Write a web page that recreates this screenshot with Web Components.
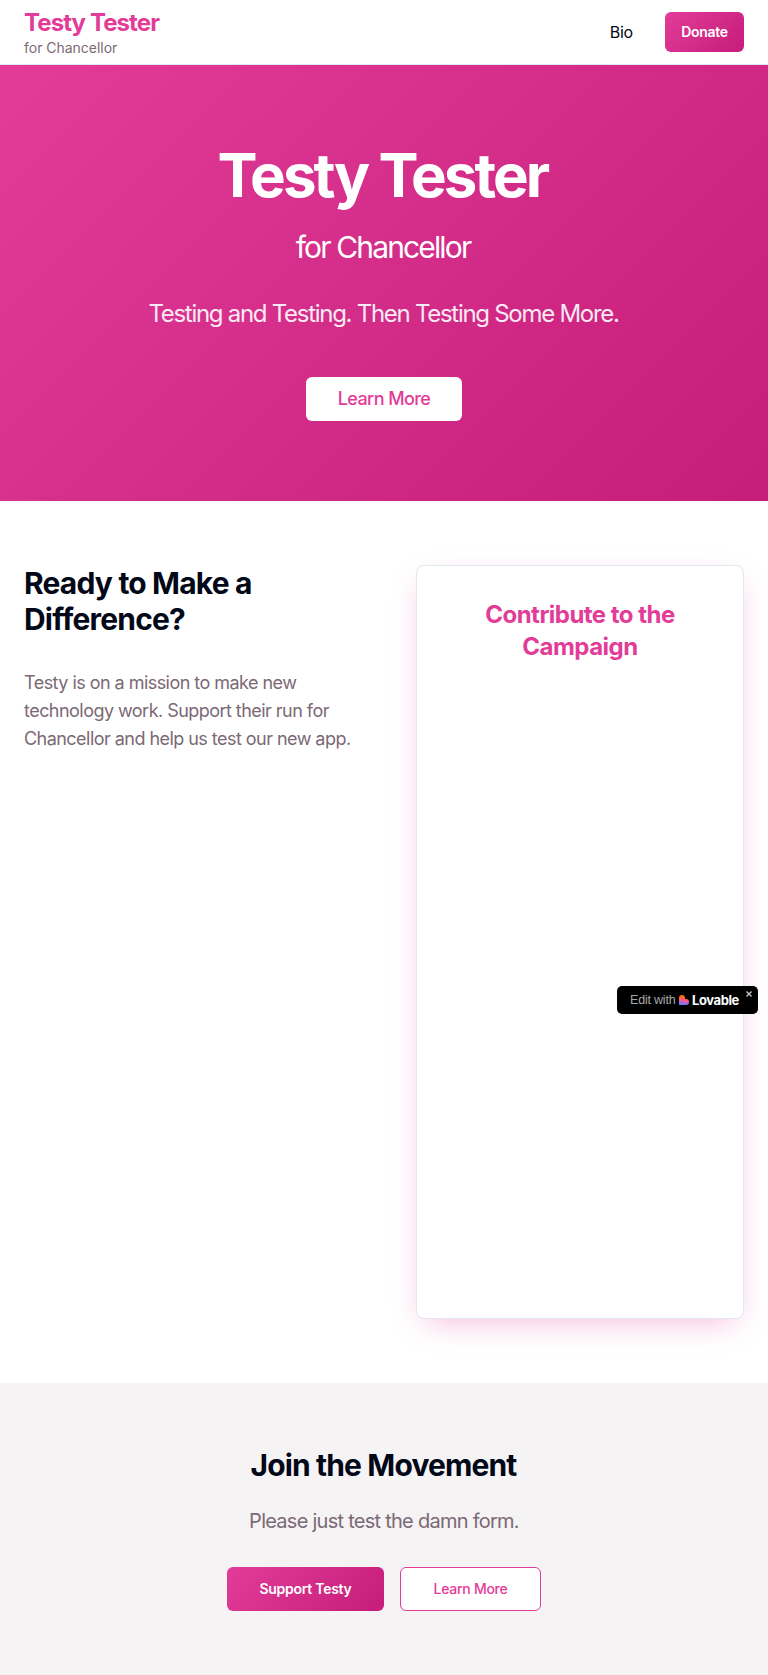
<!DOCTYPE html>
<html lang="en"><head><meta charset="utf-8"><title>Testy Tester</title>
<style>
body{margin:0;background:#fff;font-family:Inter,"Liberation Sans",sans-serif;color:#020817;line-height:1.5;--pink:#e33b98;--muted:#7b6975;--grad:linear-gradient(135deg,#e23c98,#c61c7a)}
</style></head><body>
<campaign-page></campaign-page>
<script>
const define=(name,html)=>customElements.define(name,class extends HTMLElement{constructor(){super();this.attachShadow({mode:'open'}).innerHTML=html}});
define('text-line',`<style>:host{display:block;white-space:nowrap}</style><slot></slot>`);
define('action-button',`<style>:host{display:flex;align-items:center;justify-content:center;box-sizing:border-box;border-radius:6px;background:var(--grad);color:#fff;font-weight:600;font-size:14px;line-height:20px;letter-spacing:-.27px;white-space:nowrap}:host([light]){background:#fff;color:var(--pink);font-weight:500}:host([outline]){border:1px solid var(--pink)}</style><slot></slot>`);
define('site-header',`<style>:host{display:flex;height:65px;padding:0 24px;box-sizing:border-box;border-bottom:1px solid #e2e8f0;align-items:center;justify-content:space-between;background:#fff}.name{font-size:24px;line-height:32px;font-weight:700;color:var(--pink);letter-spacing:-.9px;padding-top:1px;margin-bottom:-1px}.sub{font-size:14px;line-height:20px;color:var(--muted);letter-spacing:-.02px}nav{display:flex;align-items:center;gap:32px}.bio{letter-spacing:-.2px}action-button{width:79px;height:40px}</style>
<div><text-line class="name">Testy Tester</text-line><text-line class="sub">for Chancellor</text-line></div><nav><text-line class="bio">Bio</text-line><action-button>Donate</action-button></nav>`);
define('hero-banner',`<style>:host{display:flex;flex-direction:column;align-items:center;box-sizing:border-box;height:436px;padding-top:80px;background:var(--grad);color:#fff}h1{margin:0 3px 0 0;font-size:60px;line-height:60px;letter-spacing:-2.9px}.sub{font-size:30px;line-height:36px;margin:24px 2px 0 0;letter-spacing:-1.85px}.tag{font-size:24px;line-height:32px;margin:33px 1px 0 0;letter-spacing:-1.28px;opacity:.9}action-button{width:156px;height:44px;margin-top:47px;font-size:18px;letter-spacing:-.6px}</style><h1><text-line>Testy Tester</text-line></h1><text-line class="sub">for Chancellor</text-line><text-line class="tag">Testing and Testing. Then Testing Some More.</text-line><action-button light>Learn More</action-button>`);
define('contribution-section',`<style>:host{display:grid;grid-template-columns:328px 328px;gap:64px;padding:64px 24px;height:882px;box-sizing:border-box}h2{margin:0 0 32px;font-size:30px;line-height:36px;letter-spacing:-.82px}p{margin:0;font-size:18px;line-height:28px;color:var(--muted);letter-spacing:-.54px}.card{box-sizing:border-box;border:1px solid #e2e8f0;border-radius:8px;padding-top:33px;box-shadow:0 10px 30px -10px #e33b9866;display:flex;flex-direction:column;align-items:center;background:#fff}h3{margin:0;font-size:24px;line-height:32px;color:var(--pink);text-align:center;letter-spacing:-.52px}</style><div><h2><text-line>Ready to Make a</text-line><text-line>Difference?</text-line></h2><p><text-line>Testy is on a mission to make new</text-line><text-line>technology work. Support their run for</text-line><text-line>Chancellor and help us test our new app.</text-line></p></div><div class="card"><h3><text-line>Contribute to the</text-line><text-line>Campaign</text-line></h3></div>`);
define('movement-footer',`<style>:host{display:flex;flex-direction:column;align-items:center;height:292px;padding-top:64px;box-sizing:border-box;background:#f5f3f4}h2{margin:0 1px 0 0;font-size:30px;line-height:36px;letter-spacing:-.86px}.sub{font-size:20px;line-height:28px;color:var(--muted);margin-top:24px;letter-spacing:-.74px}.row{display:flex;gap:16px;margin-top:32px}.row action-button{width:157px;height:44px}.row [light]{width:141px}</style><h2><text-line>Join the Movement</text-line></h2><text-line class="sub">Please just test the damn form.</text-line><div class="row"><action-button>Support Testy</action-button><action-button light outline>Learn More</action-button></div>`);
define('lovable-badge',`<style>:host{position:absolute;right:10px;top:986px;width:141px;height:28px;box-sizing:border-box;padding-left:13px;border-radius:5px;background:#000;color:#a8a8ab;display:flex;align-items:center;font-size:12px;line-height:16px}.edit{width:49px;font-family:"Liberation Sans",sans-serif;font-size:12.5px;letter-spacing:-.2px}svg{display:block}.brand{color:#fff;font-weight:700;font-size:13px;letter-spacing:-.4px;margin-left:3px}.close{position:absolute;right:6px;top:5px}</style><text-line class="edit">Edit with</text-line><svg width="10" height="10" viewBox="0 0 10 10"><defs><linearGradient id="g" x1=".6" y1="0" x2=".4" y2="1"><stop offset=".3" stop-color="#ff6a16"/><stop offset=".58" stop-color="#f4579e"/><stop offset=".95" stop-color="#657bff"/></linearGradient></defs><path fill="url(#g)" d="M0 3a3 3 0 0 1 6 0v1h1a3 3 0 0 1 0 6H0Z"/></svg><text-line class="brand">Lovable</text-line><svg class="close" width="6" height="6" viewBox="0 0 6 6"><path d="M.5.5l5 5M5.5.5l-5 5" stroke="#c5c5c5" stroke-width="1.4"/></svg>`);
define('campaign-page',`<style>:host{display:block;position:relative}</style><site-header></site-header><hero-banner></hero-banner><contribution-section></contribution-section><movement-footer></movement-footer><lovable-badge></lovable-badge>`);
</script></body></html>
